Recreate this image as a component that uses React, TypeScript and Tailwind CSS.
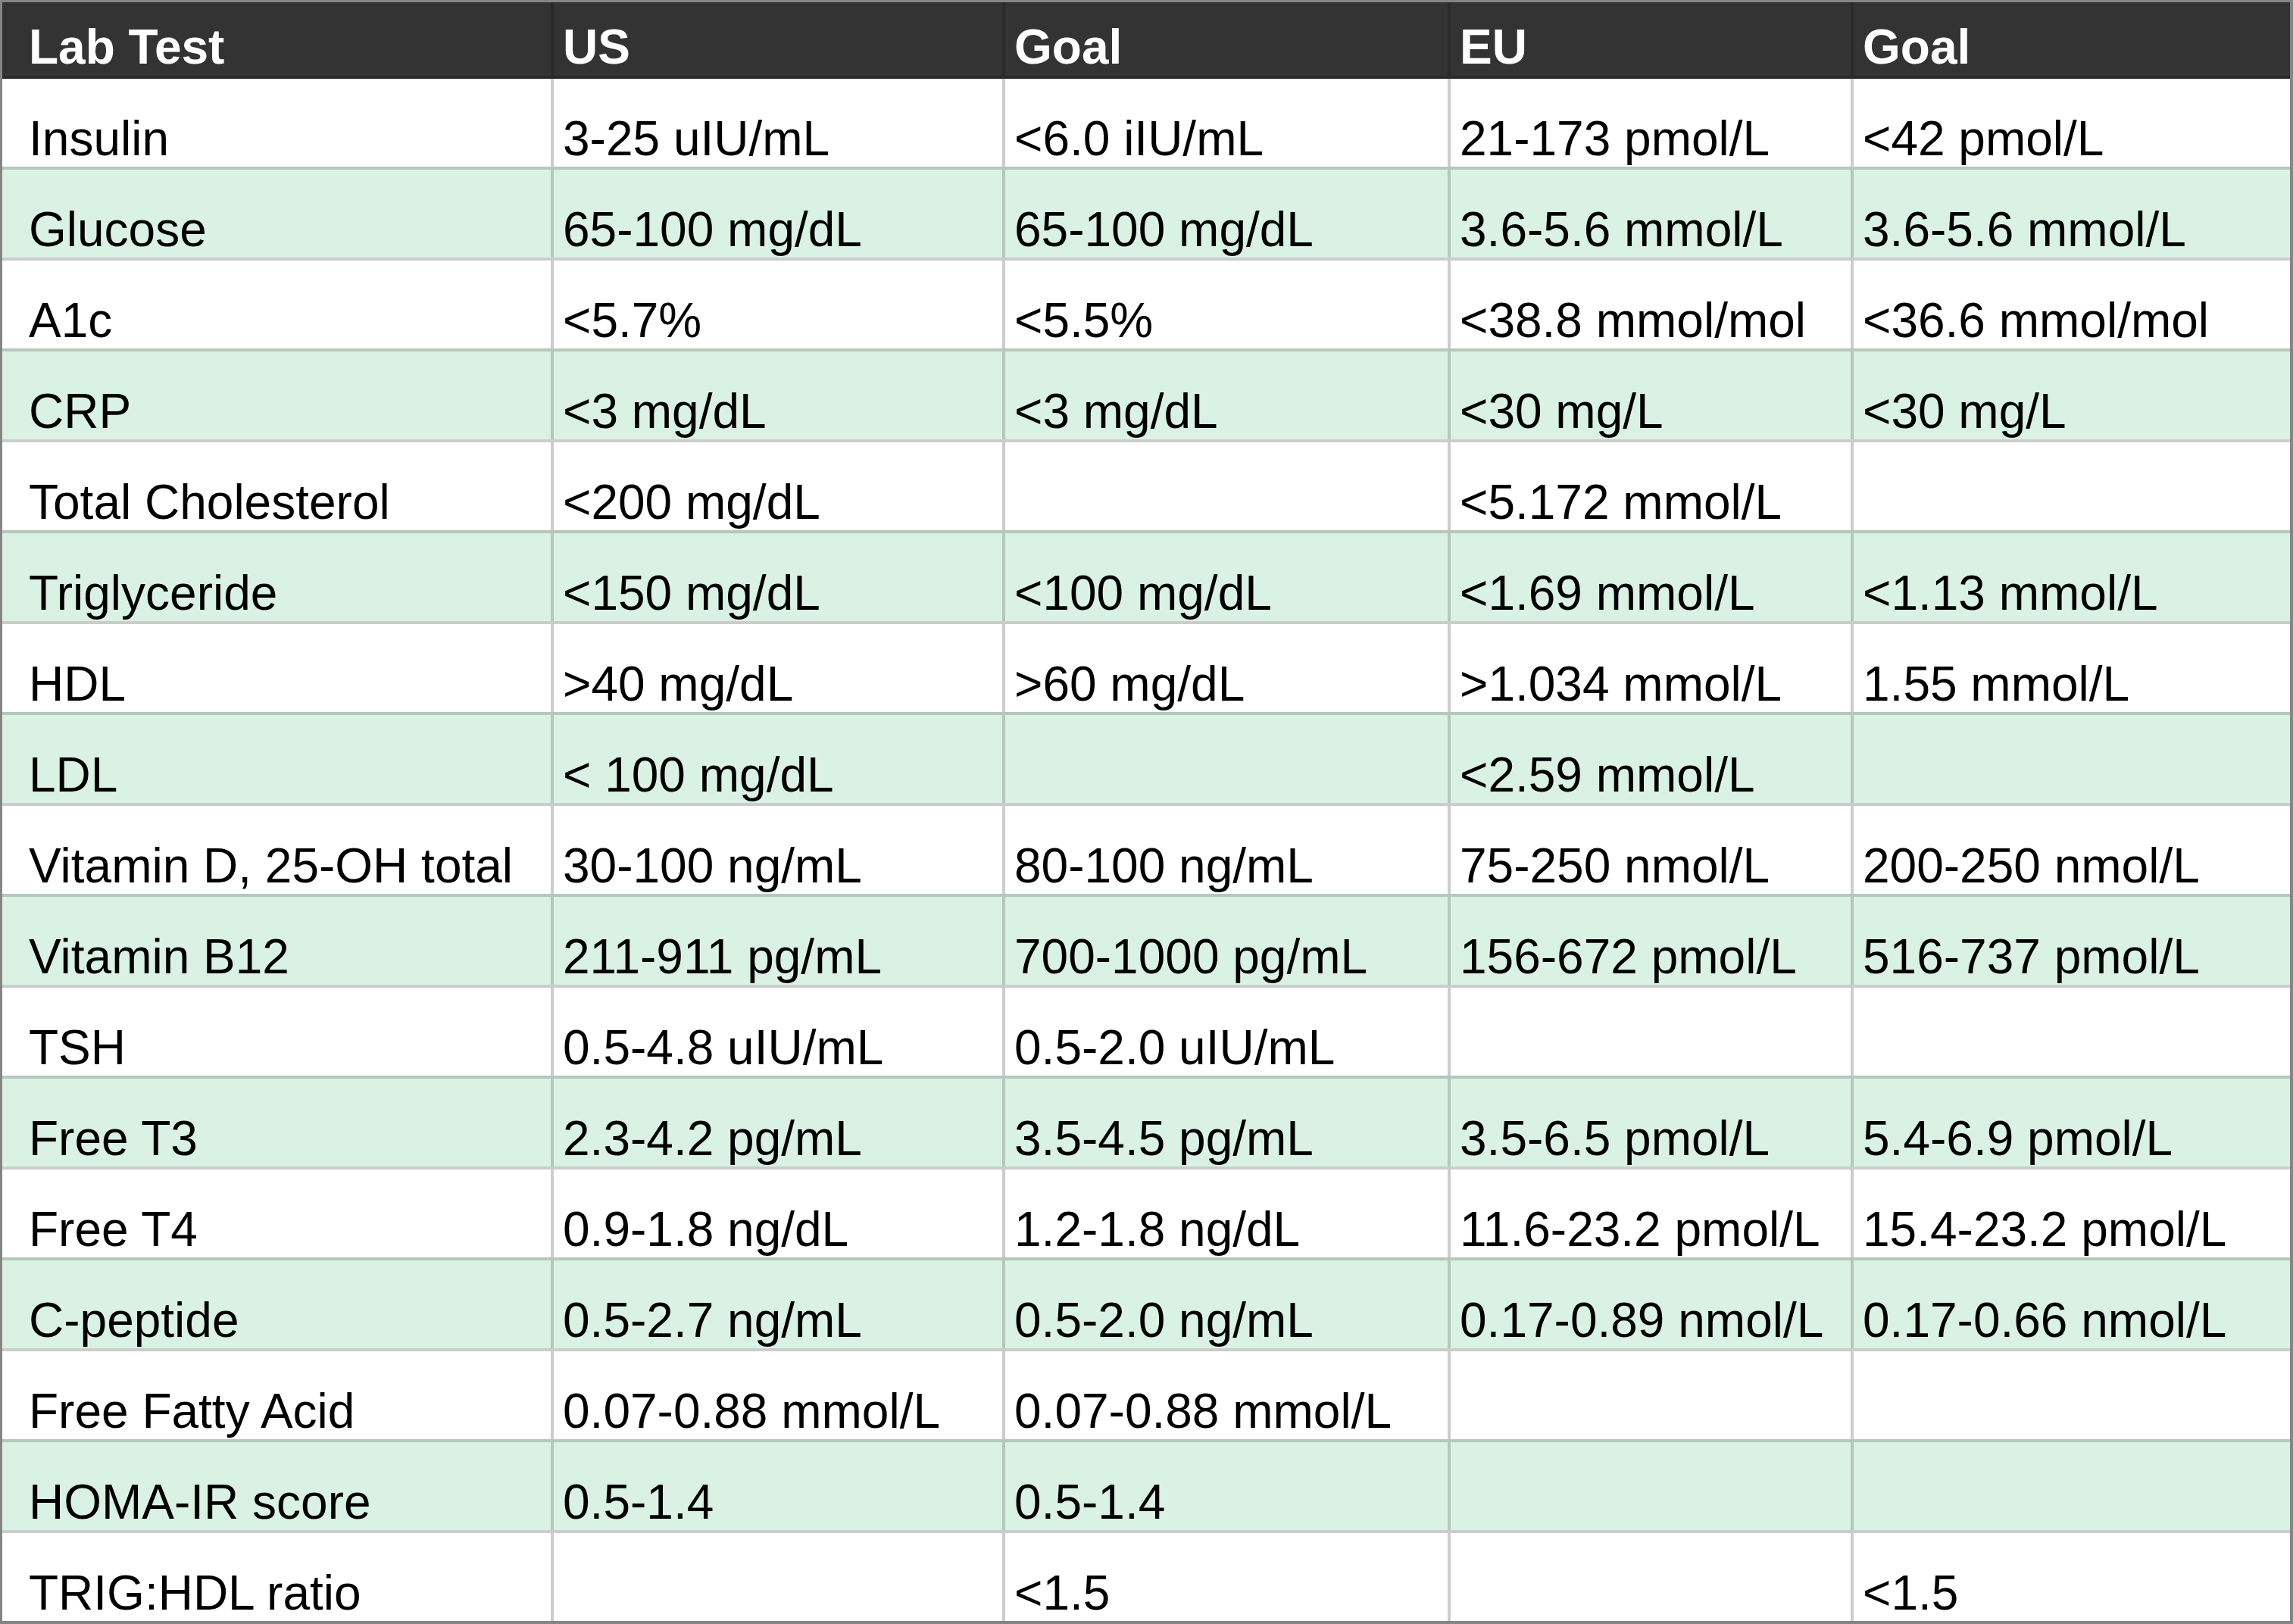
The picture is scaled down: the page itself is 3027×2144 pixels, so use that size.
const columns = ["Lab Test", "US", "Goal", "EU", "Goal"];

const rows: string[][] = [
  ["Insulin", "3-25 uIU/mL", "<6.0 iIU/mL", "21-173 pmol/L", "<42 pmol/L"],
  ["Glucose", "65-100 mg/dL", "65-100 mg/dL", "3.6-5.6 mmol/L", "3.6-5.6 mmol/L"],
  ["A1c", "<5.7%", "<5.5%", "<38.8 mmol/mol", "<36.6 mmol/mol"],
  ["CRP", "<3 mg/dL", "<3 mg/dL", "<30 mg/L", "<30 mg/L"],
  ["Total Cholesterol", "<200 mg/dL", "", "<5.172 mmol/L", ""],
  ["Triglyceride", "<150 mg/dL", "<100 mg/dL", "<1.69 mmol/L", "<1.13 mmol/L"],
  ["HDL", ">40 mg/dL", ">60 mg/dL", ">1.034 mmol/L", "1.55 mmol/L"],
  ["LDL", "< 100 mg/dL", "", "<2.59 mmol/L", ""],
  ["Vitamin D, 25-OH total", "30-100 ng/mL", "80-100 ng/mL", "75-250 nmol/L", "200-250 nmol/L"],
  ["Vitamin B12", "211-911 pg/mL", "700-1000 pg/mL", "156-672 pmol/L", "516-737 pmol/L"],
  ["TSH", "0.5-4.8 uIU/mL", "0.5-2.0 uIU/mL", "", ""],
  ["Free T3", "2.3-4.2 pg/mL", "3.5-4.5 pg/mL", "3.5-6.5 pmol/L", "5.4-6.9 pmol/L"],
  ["Free T4", "0.9-1.8 ng/dL", "1.2-1.8 ng/dL", "11.6-23.2 pmol/L", "15.4-23.2 pmol/L"],
  ["C-peptide", "0.5-2.7 ng/mL", "0.5-2.0 ng/mL", "0.17-0.89 nmol/L", "0.17-0.66 nmol/L"],
  ["Free Fatty Acid", "0.07-0.88 mmol/L", "0.07-0.88 mmol/L", "", ""],
  ["HOMA-IR score", "0.5-1.4", "0.5-1.4", "", ""],
  ["TRIG:HDL ratio", "", "<1.5", "", "<1.5"],
];

// 724 | 592 | 584 | 528 | 576 content widths, 4px grid lines between
const grid = "grid grid-cols-[724px_596px_588px_532px_580px]";

export default function App() {
  return (
    <div className="w-[3027px] h-[2144px] bg-white border-t-[3px] border-l-[3px] border-r-4 border-b-4 border-[#858585] font-['Liberation_Sans',Arial,sans-serif] text-[64px] leading-none text-black">
      {/* header */}
      <div className={`${grid} h-[101px] bg-[#333333] border-b-4 border-[#2a2a2a]`}>
        {columns.map((c, i) => (
          <div
            key={i}
            className={
              i === 0
                ? "flex items-end pl-[35px] pb-[6px] font-bold text-white whitespace-nowrap overflow-hidden"
                : "flex items-end pl-[12px] pb-[6px] border-l-4 border-[#2a2a2a] font-bold text-white whitespace-nowrap overflow-hidden"
            }
          >
            {c}
          </div>
        ))}
      </div>

      {rows.map((row, r) => {
        const green = r % 2 === 1;
        return (
          <div
            key={r}
            className={`${grid} ${r === 0 ? "h-[116px]" : "h-[120px] border-t-4"} ${
              green ? "bg-[#daf2e3] border-[#b4c8bb]" : "bg-white border-[#cccccc]"
            }`}
          >
            {row.map((cell, i) => (
              <div
                key={i}
                className={`flex items-end pb-[5px] whitespace-nowrap overflow-hidden ${
                  i === 0 ? "pl-[35px]" : "pl-[12px] border-l-4"
                } ${green ? "border-[#b4c8bb]" : "border-[#cccccc]"}`}
              >
                {cell}
              </div>
            ))}
          </div>
        );
      })}
    </div>
  );
}
